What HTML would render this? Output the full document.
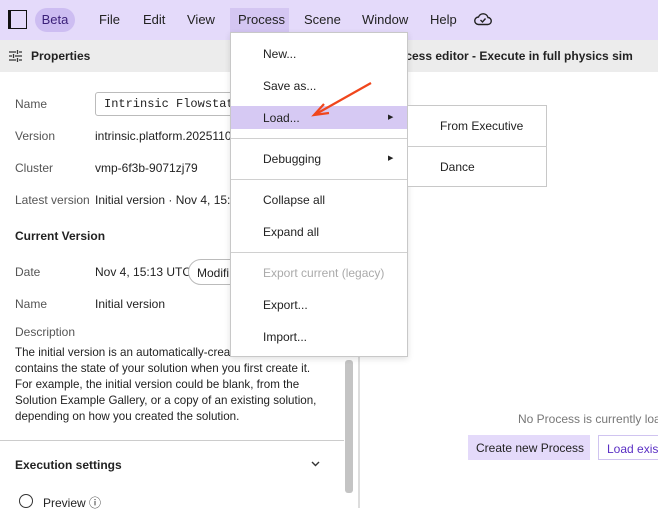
<!DOCTYPE html>
<html><head><style>
*{margin:0;padding:0;box-sizing:border-box}
body{width:658px;height:508px;overflow:hidden;background:#fff;font-family:"Liberation Sans",sans-serif;font-size:12px;color:#222;position:relative}
.a{position:absolute;white-space:nowrap}
.top{left:0;top:0;width:658px;height:40px;background:#e4dafa}
.hdr{left:0;top:40px;width:658px;height:32px;background:#ececec}
.lbl{color:#555}
.menu{left:230px;top:32px;width:178px;height:325px;background:#fff;border:1px solid #c8c8c8;box-shadow:0 2px 6px rgba(0,0,0,.12)}
.mi{position:absolute;left:32px;font-size:12px;color:#222}
.sep{position:absolute;left:0;width:176px;height:1px;background:#d0d0d0}
</style></head><body>
<div class="a top"></div>
<div class="a" style="left:8px;top:10px;width:19px;height:19px;border:1.5px solid #111;border-left-width:3px"></div>
<div class="a" style="left:35px;top:8px;width:40px;height:24px;border-radius:12px;background:#cdbdf2;color:#3a1f78;font-size:13px;text-align:center;line-height:24px">Beta</div>
<div class="a" style="left:99px;top:12px;font-size:13px">File</div>
<div class="a" style="left:143px;top:12px;font-size:13px">Edit</div>
<div class="a" style="left:187px;top:12px;font-size:13px">View</div>
<div class="a" style="left:230px;top:8px;width:59px;height:24px;background:#d4c6f2"></div>
<div class="a" style="left:238px;top:12px;font-size:13px">Process</div>
<div class="a" style="left:304px;top:12px;font-size:13px">Scene</div>
<div class="a" style="left:362px;top:12px;font-size:13px">Window</div>
<div class="a" style="left:430px;top:12px;font-size:13px">Help</div>
<svg class="a" style="left:474px;top:12px" width="18" height="14" viewBox="0 0 18 14"><path d="M4.5 12.5h9a3.5 3.5 0 0 0 .5-7A5 5 0 0 0 4.5 5a3.7 3.7 0 0 0 0 7.5z" fill="none" stroke="#222" stroke-width="1.4"/><path d="M6.5 8l2 2 3-3.5" fill="none" stroke="#222" stroke-width="1.4"/></svg>
<div class="a hdr"></div>
<svg class="a" style="left:9px;top:50px" width="13" height="12" viewBox="0 0 13 12"><path d="M0 2h7M10 2h3M0 6h3M6 6h7M0 10h7M10 10h3M8.5 0v4M4.5 4v4M8.5 8v4" stroke="#333" stroke-width="1.3"/></svg>
<div class="a" style="left:31px;top:49px;font-weight:bold;font-size:12px">Properties</div>
<div class="a" style="left:398px;top:49px;font-weight:bold;font-size:12px">ocess editor - Execute in full physics sim</div>
<div class="a lbl" style="left:15px;top:97px">Name</div>
<div class="a" style="left:95px;top:92px;width:140px;height:24px;border:1px solid #bbb;border-radius:3px;padding:4px 8px;font-family:'Liberation Mono',monospace;font-size:12px">Intrinsic Flowstate</div>
<div class="a lbl" style="left:15px;top:129px">Version</div>
<div class="a" style="left:95px;top:129px">intrinsic.platform.2025110</div>
<div class="a lbl" style="left:15px;top:161px">Cluster</div>
<div class="a" style="left:95px;top:161px">vmp-6f3b-9071zj79</div>
<div class="a lbl" style="left:15px;top:193px">Latest version</div>
<div class="a" style="left:95px;top:193px">Initial version · Nov 4, 15:1</div>
<div class="a" style="left:15px;top:229px;font-weight:bold">Current Version</div>
<div class="a lbl" style="left:15px;top:265px">Date</div>
<div class="a" style="left:95px;top:265px">Nov 4, 15:13 UTC</div>
<div class="a" style="left:188px;top:259px;width:60px;height:26px;border:1px solid #bbb;border-radius:13px;padding:6px 8px;background:#fff">Modifi</div>
<div class="a lbl" style="left:15px;top:297px">Name</div>
<div class="a" style="left:95px;top:297px">Initial version</div>
<div class="a lbl" style="left:15px;top:325px">Description</div>
<div class="a" style="left:15px;top:345px;line-height:16px;font-size:11.6px">The initial version is an automatically-created version that<br>contains the state of your solution when you first create it.<br>For example, the initial version could be blank, from the<br>Solution Example Gallery, or a copy of an existing solution,<br>depending on how you created the solution.</div>
<div class="a" style="left:0;top:440px;width:344px;height:1px;background:#ccc"></div>
<div class="a" style="left:15px;top:458px;font-weight:bold">Execution settings</div>
<svg class="a" style="left:311px;top:461px" width="9" height="6" viewBox="0 0 9 6"><path d="M1 1l3.5 3.5L8 1" stroke="#333" stroke-width="1.4" fill="none"/></svg>
<div class="a" style="left:19px;top:494px;width:14px;height:14px;border:1.5px solid #333;border-radius:50%"></div>
<div class="a" style="left:43px;top:494px">Preview &#9432;</div>
<div class="a" style="left:345px;top:360px;width:8px;height:133px;background:#c4c4c4;border-radius:3px"></div>
<div class="a" style="left:358px;top:72px;width:2px;height:436px;background:#ddd"></div>
<div class="a" style="left:518px;top:412px;color:#777">No Process is currently loa</div>
<div class="a" style="left:468px;top:435px;width:122px;height:25px;background:#e4dafa;padding:6px 8px">Create new Process</div>
<div class="a" style="left:598px;top:435px;width:70px;height:25px;border:1px solid #d0c4f0;color:#5a2fc4;padding:6px 8px">Load exist</div>
<div class="a menu">
<div class="mi" style="top:14px">New...</div>
<div class="mi" style="top:46px">Save as...</div>
<div style="position:absolute;left:0;top:73px;width:176px;height:23px;background:#d6c9f3"></div>
<div class="mi" style="top:78px">Load...</div>
<div style="position:absolute;left:157px;top:80px;font-size:7px">&#9654;</div>
<div class="sep" style="top:105px"></div>
<div class="mi" style="top:119px">Debugging</div>
<div style="position:absolute;left:157px;top:121px;font-size:7px">&#9654;</div>
<div class="sep" style="top:146px"></div>
<div class="mi" style="top:160px">Collapse all</div>
<div class="mi" style="top:192px">Expand all</div>
<div class="sep" style="top:219px"></div>
<div class="mi" style="top:233px;color:#aaa">Export current (legacy)</div>
<div class="mi" style="top:265px">Export...</div>
<div class="mi" style="top:297px">Import...</div>
</div>
<div class="a" style="left:407px;top:105px;width:140px;height:82px;background:#fff;border:1px solid #c8c8c8"></div>
<div class="a" style="left:407px;top:146px;width:140px;height:1px;background:#ccc"></div>
<div class="a" style="left:440px;top:119px">From Executive</div>
<div class="a" style="left:440px;top:160px">Dance</div>
<svg class="a" style="left:310px;top:80px" width="65" height="40" viewBox="0 0 65 40"><path d="M61 3L6 34" stroke="#f0461c" stroke-width="2.2" fill="none"/><path d="M14 24L4 35l15-2" stroke="#f0461c" stroke-width="2.2" fill="none"/></svg>
</body></html>
